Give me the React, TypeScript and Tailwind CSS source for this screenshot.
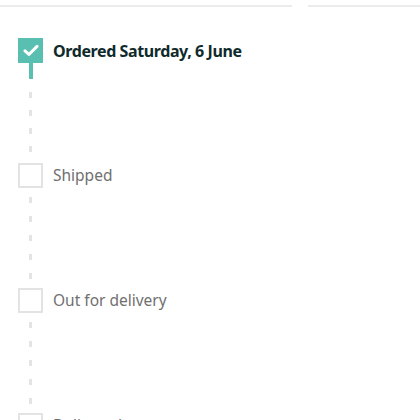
const font = { fontFamily: '"Noto Sans", "Open Sans", sans-serif' };

function Dashes({ count, first, gap }: { count: number; first: number; gap: number }) {
  return (
    <div className="flex flex-col items-center" style={{ paddingTop: first, gap }}>
      {Array.from({ length: count }).map((_, i) => (
        <div key={i} className="h-[6px] w-[3px] bg-[#e4e4e4]" />
      ))}
    </div>
  );
}

function EmptyBox() {
  return <div className="h-[25px] w-[25px] shrink-0 border-2 border-[#e3e3e3] bg-white" />;
}

export default function App() {
  return (
    <div className="relative h-[420px] w-[420px] overflow-hidden bg-white" style={font}>
      <div className="flex h-[7px] items-end">
        <div className="h-[2px] w-[292px] bg-[#ececec]" />
        <div className="w-[16px]" />
        <div className="h-[2px] flex-1 bg-[#ececec]" />
      </div>

      <div className="flex flex-col pl-[18px] pt-[31px]">
        {/* ordered */}
        <div className="flex h-[25px] items-center gap-[10px]">
          <div className="flex h-[25px] w-[25px] shrink-0 items-center justify-center bg-[#59bfb1]">
            <svg width="16" height="13" viewBox="0 0 16 13" fill="none">
              <path d="M2 6.8l3.9 3.7L14 2.4" stroke="white" strokeWidth="3" strokeLinecap="round" strokeLinejoin="round" />
            </svg>
          </div>
          <span className="text-[16px] font-bold tracking-[-0.4px] text-[#0f2a2b]">Ordered Saturday, 6 June</span>
        </div>
        <div className="flex h-[100px] w-[25px] flex-col items-center">
          <div className="h-[16px] w-[4px] bg-[#59bfb1]" />
          <Dashes count={4} first={13} gap={12} />
        </div>

        {/* shipped */}
        <div className="flex h-[25px] items-center gap-[10px]">
          <EmptyBox />
          <span className="text-[15.5px] text-[#707070]">Shipped</span>
        </div>
        <div className="h-[100px] w-[25px]">
          <Dashes count={5} first={9} gap={13} />
        </div>

        {/* out for delivery */}
        <div className="flex h-[25px] items-center gap-[10px]">
          <EmptyBox />
          <span className="text-[15.5px] text-[#707070]">Out for delivery</span>
        </div>
        <div className="h-[100px] w-[25px]">
          <Dashes count={5} first={9} gap={13} />
        </div>

        <div className="flex h-[25px] items-center gap-[10px]">
          <EmptyBox />
          <span className="text-[15.5px] text-[#707070]">Delivered</span>
        </div>
      </div>
    </div>
  );
}
